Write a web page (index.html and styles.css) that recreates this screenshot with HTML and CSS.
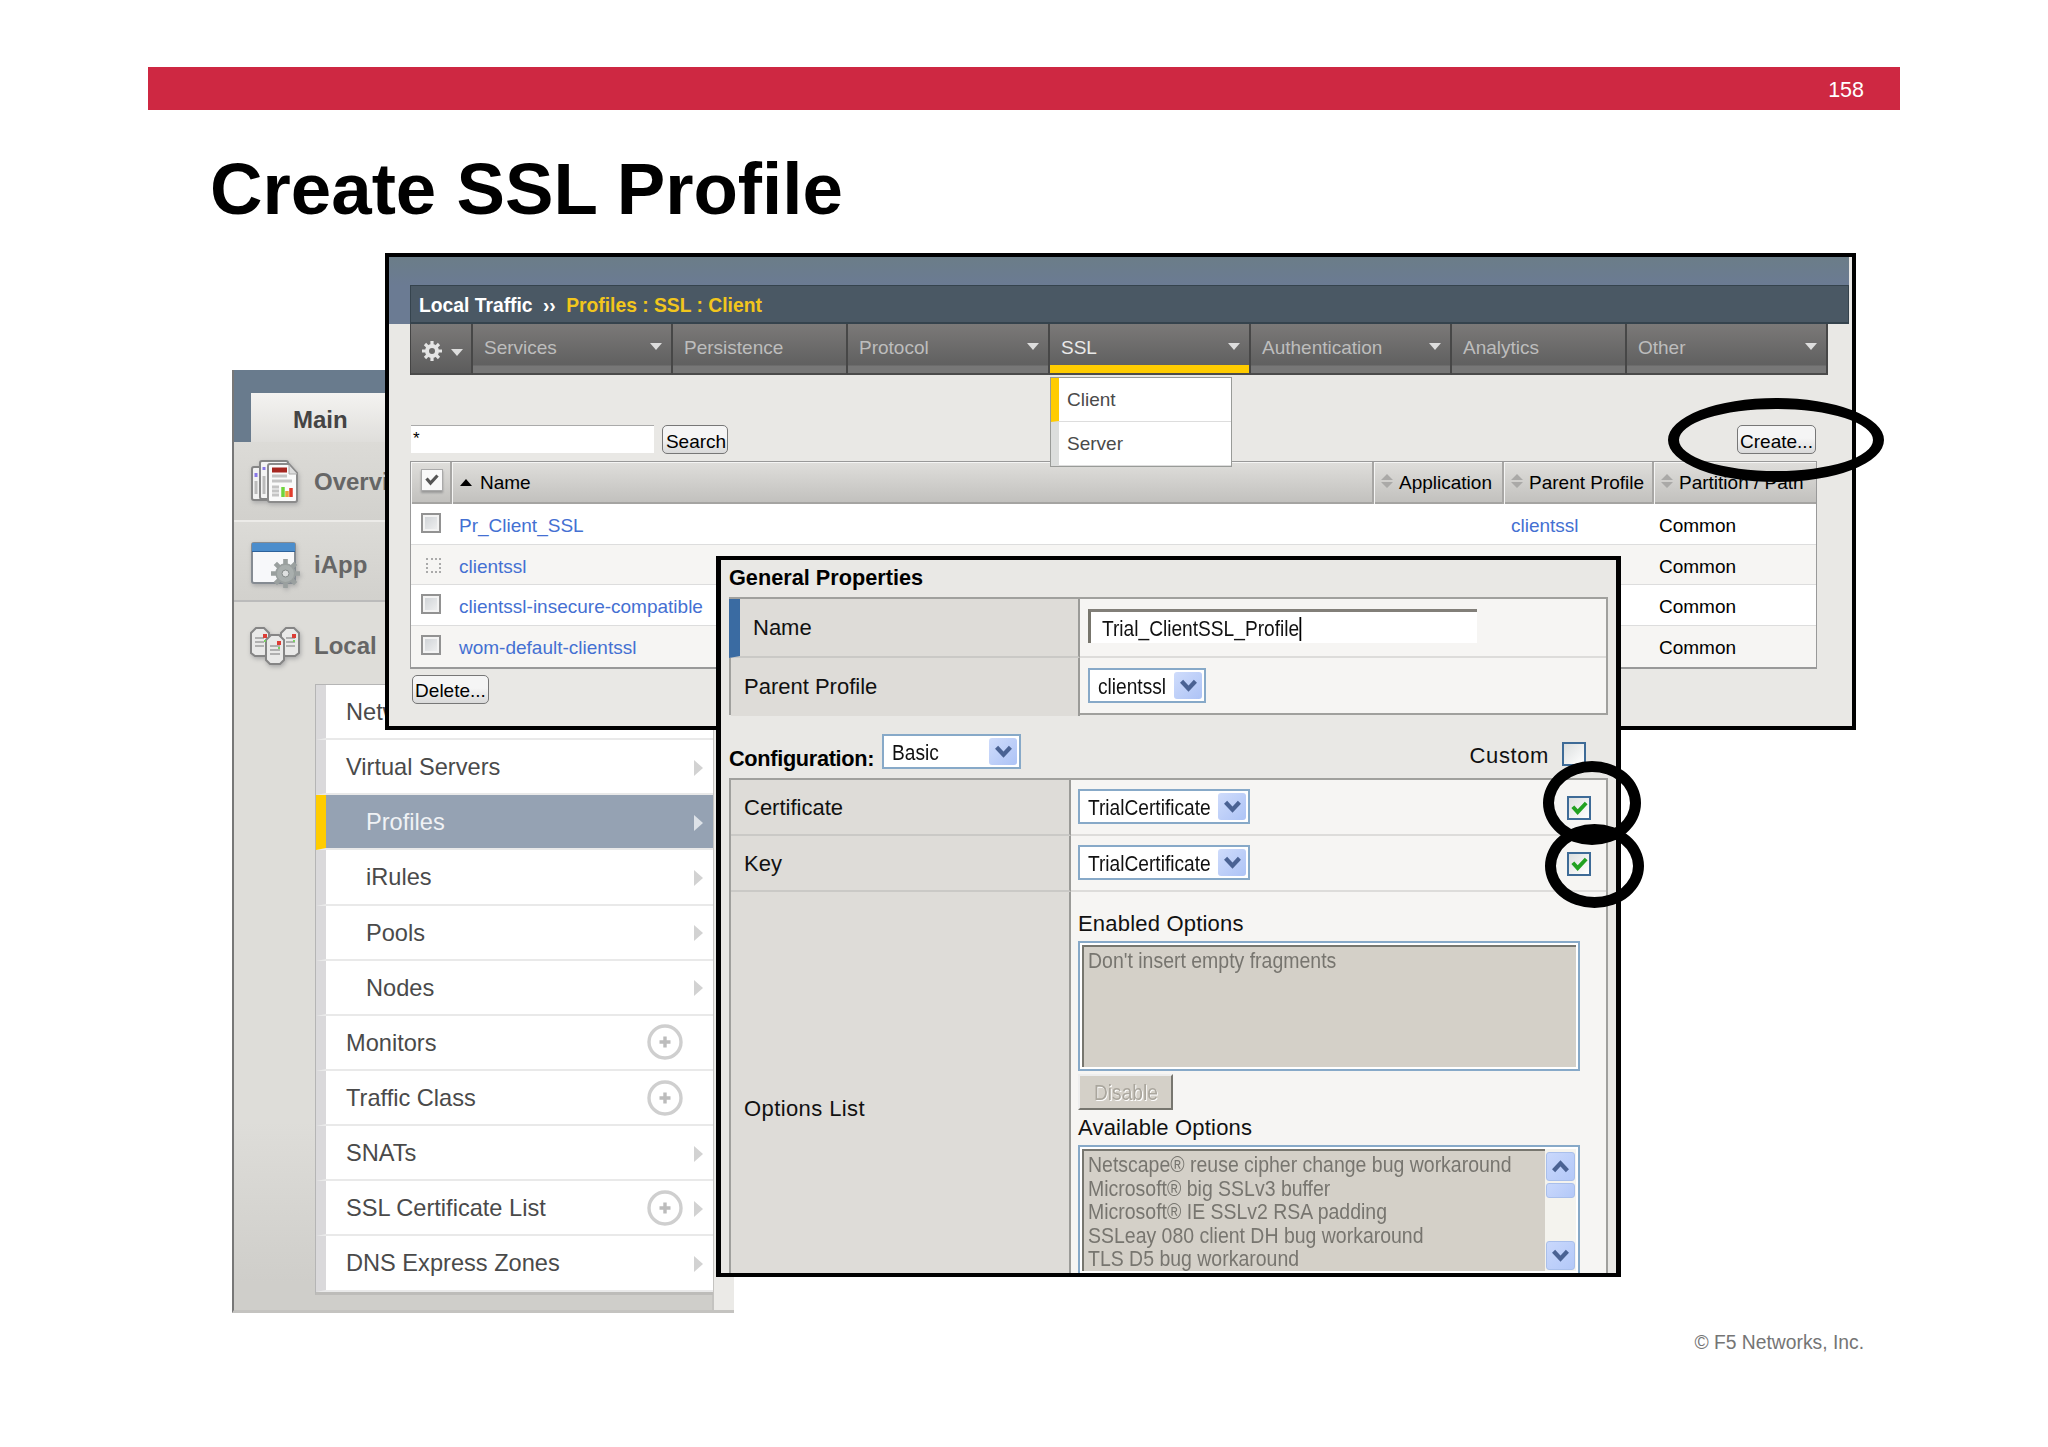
FILE: index.html
```html
<!DOCTYPE html>
<html lang="en">
<head>
    <meta charset="UTF-8">
    <title>Create SSL Profile</title>
    <link rel="stylesheet" href="styles.css">
</head>
<body>
<svg class="defs" width="0" height="0">
    <symbol id="arrow" viewBox="0 0 9 16"><path d="M0 0L9 8L0 16z" fill="currentColor"/></symbol>
    <symbol id="down" viewBox="0 0 12 7"><path d="M0 0H12L6 7z" fill="currentColor"/></symbol>
    <symbol id="plus" viewBox="0 0 36 36">
        <circle cx="18" cy="18" r="16" fill="#fff" stroke="#cfcfcf" stroke-width="3.4"/>
        <path d="M18 12.5v11M12.5 18h11" stroke="#bcbcbc" stroke-width="3.4"/>
    </symbol>
    <symbol id="chevron" viewBox="0 0 16 14"><path d="M1.5 3L8 10L14.5 3" fill="none" stroke="#4a6293" stroke-width="4"/></symbol>
    <symbol id="sort" viewBox="0 0 12 16"><path d="M0 7L6 1L12 7zM0 9H12L6 15z" fill="#aaa9a7"/></symbol>
    <symbol id="gear" viewBox="0 0 20 20">
        <circle cx="10" cy="10" r="5" fill="none" stroke="currentColor" stroke-width="4"/>
        <path d="M10 0v4M10 16v4M0 10h4M16 10h4M3 3l2.8 2.8M14.2 14.2L17 17M17 3l-2.8 2.8M5.8 14.2L3 17" stroke="currentColor" stroke-width="3.2"/>
    </symbol>
    <symbol id="tick" viewBox="0 0 14 14"><path d="M1.5 5.5L5.5 10L12.5 2.5" fill="none" stroke="currentColor" stroke-width="3.2"/></symbol>
</svg>

<div class="slide">
    <header class="topbar">158</header>
    <h1>Create SSL Profile</h1>

    <!-- Main navigation -->
    <section class="window nav">
        <div class="nav-head"><div class="tab">Main</div></div>
        <div class="nav-row overview">
            <svg width="50" height="46" viewBox="0 0 50 46">
                <rect x="2" y="8" width="22" height="33" rx="2" fill="#f2f2f2" stroke="#858585" stroke-width="2"/>
                <rect x="10" y="2" width="28" height="38" rx="2" fill="#f4f4f4" stroke="#858585" stroke-width="2"/>
                <path d="M6 14v4M14 8v3" stroke="#8877e8" stroke-width="3"/><path d="M6 22v13M14 17v18" stroke="#bbb" stroke-width="3"/>
                <path d="M20 5H39L47 14V41q0 2-2 2H20q-2 0-2-2V7q0-2 2-2z" fill="#fafafa" stroke="#8b8b8b" stroke-width="2"/>
                <path d="M39 6v9h8" fill="#ddd" stroke="#aaa"/>
                <path d="M22 11H37" stroke="#a62620" stroke-width="5"/>
                <path d="M22 17H37M22 22H42M22 28h7M22 32h7M22 36h7" stroke="#c4c4c4" stroke-width="3"/>
                <path d="M33 28v10" stroke="#70d43c" stroke-width="3.5"/><path d="M37 32v6" stroke="#e9a23a" stroke-width="3.5"/><path d="M41 29v9" stroke="#e23b2c" stroke-width="3.5"/>
            </svg>
            <span>Overview</span>
        </div>
        <div class="nav-row iapp">
            <svg width="50" height="48" viewBox="0 0 50 48">
                <rect x="2" y="2" width="43" height="40" rx="2" fill="#f7f8fa" stroke="#858b92" stroke-width="2"/>
                <path d="M2 2H45V10H2z" fill="#4b8dcc"/><path d="M2 10.500H45" stroke="#2d629b"/>
                <g color="#9aa09f"><use href="#gear" x="21" y="18" width="29" height="29"/></g>
                <circle cx="35.500" cy="32.500" r="8.500" fill="#a9afae"/><circle cx="35.500" cy="32.500" r="3.500" fill="#dfe1e1" stroke="#858b8a"/>
            </svg>
            <span>iApp</span>
        </div>
        <div class="nav-row local">
            <svg width="50" height="40" viewBox="0 0 50 40">
                <g fill="#e9e9e8" stroke="#858585" stroke-width="2">
                    <path d="M6 2H14L19 7V26L15 30H5L1 27V7z"/>
                    <path d="M36 2H44L49 7V27L45 30H35L31 26V7z"/>
                    <path d="M21 9H29L34 14V34L30 38H20L16 34V14z"/>
                </g>
                <path d="M5 12H14M5 16H14M5 20H14M36 12H45M36 16H45M36 20H45M20 20H30M20 24H30M20 28H30" stroke="#b0b0b0" stroke-width="2"/>
                <path d="M13 10h4M42 10h4M27 17h4" stroke="#dd3d36" stroke-width="4"/>
                <path d="M14 15h2M43 15h2M28 22h2" stroke="#78cf62" stroke-width="2"/>
            </svg>
            <span>Local Traffic</span>
        </div>
        <ul class="submenu">
            <li>Network Map</li>
            <li>Virtual Servers<svg class="arrow"><use href="#arrow"/></svg></li>
            <li class="sub active">Profiles<svg class="arrow"><use href="#arrow"/></svg></li>
            <li class="sub">iRules<svg class="arrow"><use href="#arrow"/></svg></li>
            <li class="sub">Pools<svg class="arrow"><use href="#arrow"/></svg></li>
            <li class="sub">Nodes<svg class="arrow"><use href="#arrow"/></svg></li>
            <li>Monitors<svg class="plus"><use href="#plus"/></svg></li>
            <li>Traffic Class<svg class="plus"><use href="#plus"/></svg></li>
            <li>SNATs<svg class="arrow"><use href="#arrow"/></svg></li>
            <li>SSL Certificate List<svg class="plus"><use href="#plus"/></svg><svg class="arrow"><use href="#arrow"/></svg></li>
            <li>DNS Express Zones<svg class="arrow"><use href="#arrow"/></svg></li>
        </ul>
    </section>

    <!-- Profile list -->
    <section class="window list">
        <div class="list-head">
            <div class="crumbs">Local Traffic <i>››</i> <b>Profiles : SSL : Client</b></div>
        </div>
        <nav class="menubar">
            <div class="gear-cell"><svg width="20" height="20"><use href="#gear"/></svg><svg class="down"><use href="#down"/></svg></div>
            <div class="w200">Services<svg class="down"><use href="#down"/></svg></div>
            <div class="w175">Persistence</div>
            <div class="w202">Protocol<svg class="down"><use href="#down"/></svg></div>
            <div class="w201 current">SSL<svg class="down"><use href="#down"/></svg>
                <div class="dropdown"><span class="on">Client</span><span>Server</span></div>
            </div>
            <div class="w201">Authentication<svg class="down"><use href="#down"/></svg></div>
            <div class="w175">Analytics</div>
            <div class="w201">Other<svg class="down"><use href="#down"/></svg></div>
        </nav>
        <div class="toolbar">
            <div class="filter">*</div>
            <div class="btn search">Search</div>
            <div class="btn create">Create...</div>
        </div>
        <div class="grid">
            <div class="tr th">
                <div><span class="check-all"><svg width="14" height="14"><use href="#tick"/></svg></span></div>
                <div class="name"><svg width="12" height="7" viewBox="0 0 12 7"><path d="M0 7H12L6 0z"/></svg>Name</div>
                <div><svg class="sort"><use href="#sort"/></svg>Application</div>
                <div><svg class="sort"><use href="#sort"/></svg>Parent Profile</div>
                <div><svg class="sort"><use href="#sort"/></svg>Partition / Path</div>
            </div>
            <div class="tr"><div><span class="box"></span></div><a>Pr_Client_SSL</a><div></div><a>clientssl</a><div>Common</div></div>
            <div class="tr odd"><div><span class="box dotted"></span></div><a>clientssl</a><div></div><div></div><div>Common</div></div>
            <div class="tr"><div><span class="box"></span></div><a>clientssl-insecure-compatible</a><div></div><div></div><div>Common</div></div>
            <div class="tr odd"><div><span class="box"></span></div><a>wom-default-clientssl</a><div></div><div></div><div>Common</div></div>
        </div>
        <div class="btn delete">Delete...</div>
    </section>

    <!-- Profile form -->
    <section class="window form">
        <h2>General Properties</h2>
        <div class="props general">
            <div class="label required">Name</div>
            <div class="value"><div class="text-input"><span>Trial_ClientSSL_Profile</span></div></div>
            <div class="label">Parent Profile</div>
            <div class="value"><div class="select parent"><span>clientssl</span><i><svg><use href="#chevron"/></svg></i></div></div>
        </div>
        <div class="config-head">
            <h2>Configuration:</h2>
            <div class="select basic"><span>Basic</span><i><svg><use href="#chevron"/></svg></i></div>
            <span class="custom">Custom</span>
            <span class="xp-check"></span>
        </div>
        <div class="props config">
            <div class="label">Certificate</div>
            <div class="value"><div class="select cert"><span>TrialCertificate</span><i><svg><use href="#chevron"/></svg></i></div><span class="xp-check"><svg width="17" height="17"><use href="#tick"/></svg></span></div>
            <div class="label">Key</div>
            <div class="value"><div class="select cert"><span>TrialCertificate</span><i><svg><use href="#chevron"/></svg></i></div><span class="xp-check"><svg width="17" height="17"><use href="#tick"/></svg></span></div>
            <div class="label options">Options List</div>
            <div class="value options">
                <p>Enabled Options</p>
                <div class="listbox"><div class="lines"><span>Don't insert empty fragments</span></div></div>
                <div class="disable"><span>Disable</span></div>
                <p>Available Options</p>
                <div class="listbox">
                    <div class="lines">
                        <span>Netscape® reuse cipher change bug workaround</span>
                        <span>Microsoft® big SSLv3 buffer</span>
                        <span>Microsoft® IE SSLv2 RSA padding</span>
                        <span>SSLeay 080 client DH bug workaround</span>
                        <span>TLS D5 bug workaround</span>
                    </div>
                    <div class="scroll">
                        <i><svg class="up"><use href="#chevron"/></svg></i>
                        <i class="thumb"></i>
                        <i class="last"><svg><use href="#chevron"/></svg></i>
                    </div>
                </div>
            </div>
        </div>
    </section>

    <!-- Callouts -->
    <div class="ring ring-create"></div>
    <div class="ring ring-cert"></div>
    <div class="ring ring-key"></div>

    <footer>© F5 Networks, Inc.</footer>
</div>
</body>
</html>
```
FILE: styles.css
```css
* {
    box-sizing: border-box;
}
body {
    margin: 0;
    background: #fff;
    font-family: "Liberation Sans", Arial, sans-serif;
    color: #000;
}
.defs {
    position: absolute;
}
.slide {
    position: relative;
    width: 2048px;
    height: 1447px;
    padding: 67px 148px 0;
    overflow: hidden;
}
.topbar {
    height: 43px;
    padding-right: 36px;
    background: #ce2842;
    color: #fff;
    font-size: 21.5px;
    line-height: 46px;
    text-align: right;
}
h1 {
    margin: 38px 0 0 62px;
    font-size: 72.7px;
    line-height: 82px;
}
footer {
    position: absolute;
    right: 184px;
    bottom: 93px;
    color: #757575;
    font-size: 19.3px;
    line-height: 22px;
}
.window {
    position: absolute;
    overflow: hidden;
}

/* navigation */
.nav {
    left: 232px;
    top: 370px;
    width: 502px;
    height: 943px;
    background: linear-gradient(90deg, transparent 478px, #c4c3c0 478px, #c4c3c0 480px, #ebeae7 480px),
        linear-gradient(#deddd9 80%, #cfceca 97%);
    border-left: 2px solid #777;
    border-bottom: 3px solid #c4c3c0;
}
.nav-head {
    height: 72px;
    padding: 23px 0 0 17px;
    background: #697b8d;
}
.tab {
    height: 49px;
    padding-left: 42px;
    background: linear-gradient(#f4f3f1, #dfdedb);
    color: #444;
    font-size: 24px;
    font-weight: bold;
    line-height: 54px;
}
.nav-row {
    display: flex;
    align-items: center;
    height: 80px;
    padding: 2px 0 0 16px;
    gap: 14px;
    color: #666;
    font-size: 24px;
    font-weight: bold;
    white-space: nowrap;
    background: linear-gradient(#dcdbd7, #d2d1cd);
    border-bottom: 2px solid #ecebe8;
}
.nav-row svg {
    filter: drop-shadow(1px 2px 2px #aaa);
}
.iapp {
    padding-top: 8px;
    border-bottom: 2px solid #bbb;
}
.local {
    height: 82px;
    padding-top: 5px;
    background: none;
    border: 0;
    word-spacing: 3px;
}
.submenu {
    width: 398px;
    margin: 0 0 0 81px;
    padding: 0;
    list-style: none;
    border-left: 1px solid #b5b5b5;
    border-top: 1px solid #b5b5b5;
    border-bottom: 3px solid #bdbcb9;
}
.submenu li {
    display: flex;
    align-items: center;
    height: 55.15px;
    padding: 2px 10px 0 20px;
    background: #fff;
    border-left: 10px solid #dad9db;
    border-bottom: 2px solid #e9e9e9;
    color: #4a4a4a;
    font-size: 23.6px;
}
.submenu .sub {
    padding-left: 40px;
}
.submenu .active {
    background: #95a2b3;
    border-left-color: #fc0;
    color: #f0f2f5;
}
.arrow {
    width: 9px;
    height: 16px;
    margin-left: auto;
    color: #d2d2d2;
}
.active .arrow {
    color: #dde2e8;
}
.plus {
    width: 36px;
    height: 36px;
    margin: -2px 20px 0 auto;
}
.plus + .arrow {
    margin-left: -9px;
}

/* profile list */
.list {
    left: 385px;
    top: 253px;
    width: 1471px;
    height: 477px;
    border: 4px solid #000;
    background: #e9e8e5;
    font-size: 19px;
    overflow: visible;
}
.list-head {
    height: 67px;
    margin-right: 3px;
    padding: 28px 0 0 21px;
    background: linear-gradient(#6b7d88, #6b7b93 28px);
}
.crumbs {
    height: 39px;
    padding-left: 8px;
    background: #4a5864;
    border: 1px solid #35434d;
    border-bottom-width: 2px;
    color: #fff;
    font-weight: bold;
    font-size: 19.3px;
    line-height: 40px;
}
.crumbs i {
    margin: 0 5px;
    font-style: normal;
}
.crumbs b {
    color: #f2c61c;
}
.menubar {
    display: flex;
    width: 1418px;
    height: 51px;
    margin-left: 21px;
    border-left: 1px solid #444;
}
.menubar > div {
    position: relative;
    display: flex;
    justify-content: space-between;
    padding: 12px 9px 0 11px;
    background: linear-gradient(#7b7978, #606060 41px, #777 42px, #777);
    border-right: 2px solid #474747;
    border-bottom: 2px solid #4b4b4b;
    color: #bdbdbd;
    line-height: 24px;
}
.menubar .gear-cell {
    width: 62px;
    padding: 17px 8px 0 11px;
    color: #e4e4e4;
    background: linear-gradient(#7b7978, #5c5c5c);
}
.gear-cell .down {
    margin-top: 8px;
}
.w175 { width: 175px; }
.w200 { width: 200px; }
.w201 { width: 201px; }
.w202 { width: 202px; }
.down {
    width: 12px;
    height: 7px;
    margin-top: 7px;
    color: #ddd;
}
.menubar .current {
    background: linear-gradient(#7b7978, #606060 41px, #fc0 41px);
    color: #e9e9e9;
}
.dropdown {
    position: absolute;
    left: 0;
    top: 53px;
    z-index: 2;
    width: 182px;
    border: 1px solid #999b98;
    background: #fff;
    color: #4a4a4a;
}
.dropdown span {
    display: block;
    height: 44px;
    padding-left: 8px;
    border-left: 8px solid #dcdedd;
    border-bottom: 1px solid #ddd;
    line-height: 43px;
}
.dropdown .on {
    border-left-color: #fc0;
}
.toolbar {
    display: flex;
    height: 86px;
    padding: 50px 36px 0 22px;
}
.filter {
    width: 243px;
    height: 28px;
    padding-left: 2px;
    background: #fff;
    border-top: 1px solid #aaa;
    font-size: 17px;
    line-height: 26px;
}
.btn {
    height: 29px;
    border: 1px solid #777;
    border-radius: 5px;
    background: linear-gradient(#f5f5f5 45%, #d9d9d9);
    line-height: 32px;
    text-align: center;
    white-space: nowrap;
}
.search {
    width: 66px;
    margin-left: 8px;
    padding-left: 2px;
}
.create {
    width: 79px;
    margin-left: auto;
}
.delete {
    width: 77px;
    margin: 6px 0 0 23px;
    line-height: 30px;
}
.grid {
    width: 1407px;
    margin-left: 21px;
    border: 1px solid #999;
    border-bottom-width: 2px;
}
.tr {
    display: grid;
    grid-template-columns: 41px 922px 130px 150px 162px;
    height: 40.7px;
    background: #fff;
    border-bottom: 1px solid #ddd;
    line-height: 43px;
}
.tr:last-child {
    border: 0;
}
.tr > * {
    padding-left: 7px;
    white-space: nowrap;
}
.tr > :last-child {
    padding-left: 5px;
}
.tr > :first-child {
    padding: 9px 0 0 10px;
}
.tr.odd {
    background: #f6f5f3;
}
.tr a {
    color: #4470d2;
}
.tr.th {
    height: 42px;
    background: linear-gradient(#dfdedb, #c2c1be);
    border-bottom: 2px solid #a5a4a2;
}
.th > div {
    border-right: 2px solid #a7a6a4;
    box-shadow: inset 1px 1px 0 #f5f5f4;
    line-height: 42px;
}
.tr.th > :first-child {
    padding-top: 7px;
}
.th > div:last-child {
    border: 0;
    padding-left: 7px;
}
.th .name svg {
    margin: 0 8px 3px 1px;
}
.sort {
    width: 12px;
    height: 16px;
    margin-right: 6px;
    vertical-align: 0;
}
.check-all {
    display: flex;
    justify-content: center;
    align-items: center;
    width: 22px;
    height: 22px;
    background: #f9f9f9;
    border: 1px solid #aaa;
    box-shadow: 0 2px 2px #999;
    color: #555;
}
.box {
    display: block;
    width: 20px;
    height: 20px;
    background: linear-gradient(135deg, #ccd0d4, #f2f2f2);
    border: 2px solid #929292;
    box-shadow: inset 0 0 0 2px #f3f3f3;
}
.box.dotted {
    width: 15px;
    height: 15px;
    margin: 4px 0 0 5px;
    background: none;
    border: 2px dotted #aaa;
    box-shadow: none;
}

/* profile form */
.form {
    left: 716px;
    top: 556px;
    width: 905px;
    height: 721px;
    padding: 0 8px;
    border: 4px solid #000;
    border-width: 4px 5px;
    background: #e9e8e5;
    color: #111;
    font-size: 22px;
}
h2 {
    margin: 0;
    font-size: 21.7px;
    line-height: 36px;
    color: #000;
}
.form > h2 {
    height: 37px;
}
.props {
    display: grid;
    width: 879px;
    background: #f6f5f3;
    border: 2px solid #a0a09d;
}
.label {
    padding: 0 0 0 13px;
    background: #dedcd8;
    border-right: 2px solid #9b9b98;
    border-bottom: 2px solid #cac9c6;
    line-height: 56px;
}
.value {
    display: flex;
    padding: 9px 0 0 7px;
    border-bottom: 2px solid #dddcda;
}
.general .label:nth-child(3),
.general .value:nth-child(4) {
    border-bottom: 0;
}
.general {
    height: 118px;
    grid-template-columns: 349px 1fr;
    grid-template-rows: 59px 1fr;
}
.general .label {
    line-height: 58px;
}
.general .required {
    margin-left: -2px;
    padding-left: 13px;
    border-left: 11px solid #3a6ba2;
}
.general .value {
    padding-top: 10px;
}
.text-input {
    width: 389px;
    height: 34px;
    margin-left: 1px;
    padding-left: 11px;
    background: #fff;
    border-left: 3px solid #77756c;
    border-top: 3px solid #827f79;
    line-height: 34px;
}
.text-input span,
.select span,
.lines span,
.disable span {
    display: inline-block;
    transform: scaleX(0.87);
    transform-origin: left;
    white-space: nowrap;
}
.text-input span {
    border-right: 2px solid #000;
    line-height: 24px;
}
.select {
    display: flex;
    justify-content: space-between;
    height: 35px;
    padding: 2px 2px 2px 8px;
    background: #fff;
    border: 2px solid #87a9c8;
    line-height: 30px;
}
.select span {
    width: 0;
}
.select i {
    display: flex;
    justify-content: center;
    align-items: center;
    width: 28px;
    height: 27px;
    border-radius: 3px;
    background: linear-gradient(135deg, #cfdcfb, #adc3f6);
}
.select svg,
.scroll svg {
    width: 17px;
    height: 15px;
}
.select.parent {
    width: 118px;
    margin-left: 1px;
}
.select.basic {
    width: 139px;
    margin-left: 10px;
}
.select.cert {
    width: 172px;
}
.config-head {
    display: flex;
    height: 63px;
    padding: 19px 22px 0 0;
}
.config-head h2 {
    width: 143px;
    padding-top: 7px;
    letter-spacing: -0.3px;
}
.custom {
    margin: 9px 13px 0 auto;
    letter-spacing: 0.6px;
}
.xp-check {
    display: flex;
    justify-content: center;
    align-items: center;
    width: 24px;
    height: 24px;
    margin-top: 8px;
    border: 2px solid #3e6b97;
    background: linear-gradient(135deg, #dcdfdf, #fff);
    color: #21a121;
}
.value .xp-check {
    margin: 7px 15px 0 auto;
}
.config {
    height: 560px;
    grid-template-columns: 340px 1fr;
    grid-template-rows: 56px 56px 1fr;
}
.config .label {
    line-height: 55px;
}
.config .label.options {
    padding-top: 189px;
    letter-spacing: 0.4px;
}
.value.options {
    display: block;
    padding: 15px 0 0 7px;
}
.options p {
    margin: 0;
    height: 34px;
    letter-spacing: 0.2px;
    line-height: 34px;
}
.listbox {
    display: flex;
    width: 502px;
    height: 130px;
    padding: 2px;
    background: #fff;
    border: 2px solid #87a9c8;
}
.lines {
    flex: 1;
    min-width: 0;
    padding: 2px 0 0 4px;
    background: #d4d0c8;
    border-left: 2px solid #77766f;
    border-top: 2px solid #77766f;
    color: #77756f;
    line-height: 23.6px;
}
.lines span {
    display: block;
    transform: scaleX(0.885);
}
.disable {
    width: 95px;
    height: 36px;
    margin: 3px 0 1px;
    padding-left: 14px;
    background: #d4d0c8;
    border: 2px solid #eee;
    border-right: 2px solid #77766f;
    border-bottom: 2px solid #77766f;
    color: #aaa69d;
    text-shadow: 1px 1px 0 #fff;
    line-height: 33px;
}
.scroll {
    display: flex;
    flex: none;
    flex-direction: column;
    gap: 2px;
    width: 31px;
    padding: 3px 1px 1px;
    background: #f4f3ee;
}
.scroll i {
    display: flex;
    justify-content: center;
    align-items: center;
    height: 29px;
    border-radius: 3px;
    border: 1px solid #a9bfeb;
    background: linear-gradient(135deg, #c9d8fc, #b3c8f8);
}
.scroll .thumb {
    height: 15px;
}
.scroll .last {
    margin-top: auto;
}
.up {
    transform: rotate(180deg);
}

/* callouts */
.ring {
    position: absolute;
    border: 11px solid #000;
    border-radius: 50%;
}
.ring-create {
    left: 1668px;
    top: 398px;
    width: 216px;
    height: 84px;
}
.ring-cert {
    left: 1543px;
    top: 761px;
    width: 98px;
    height: 84px;
}
.ring-key {
    left: 1545px;
    top: 824px;
    width: 99px;
    height: 84px;
}
```
